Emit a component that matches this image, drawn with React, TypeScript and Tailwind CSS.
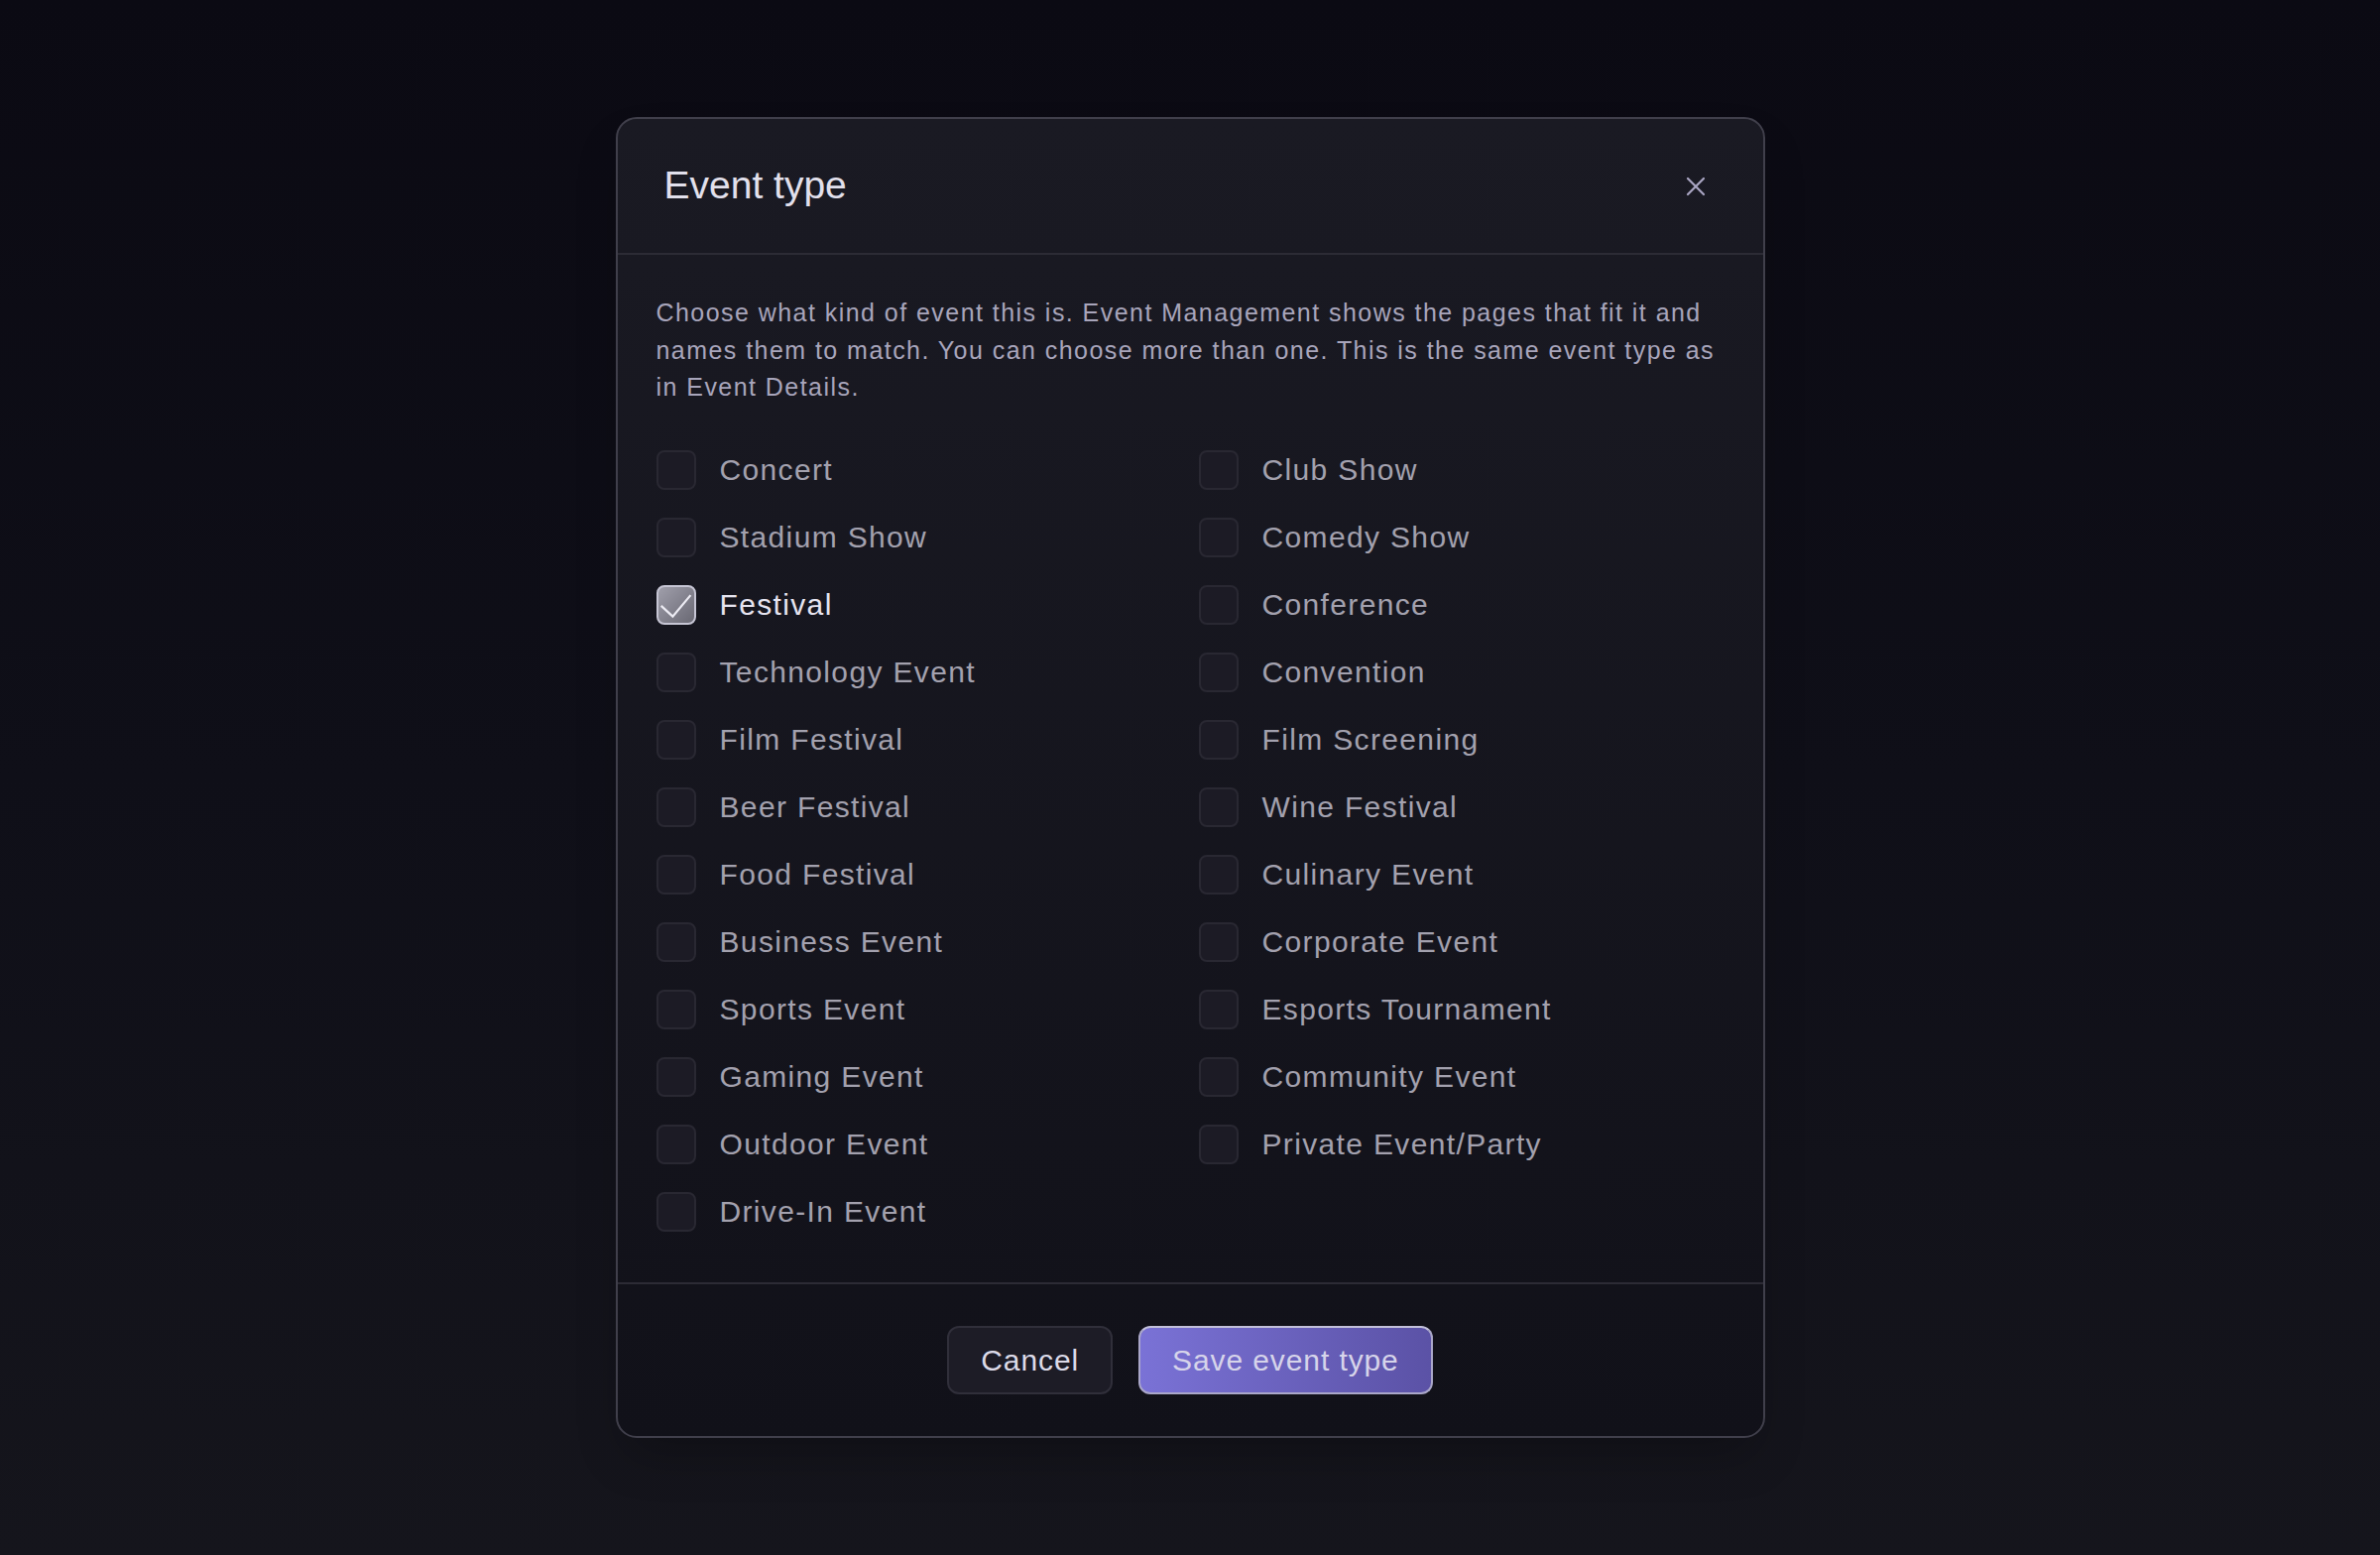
const left = [
  'Concert',
  'Stadium Show',
  'Festival',
  'Technology Event',
  'Film Festival',
  'Beer Festival',
  'Food Festival',
  'Business Event',
  'Sports Event',
  'Gaming Event',
  'Outdoor Event',
  'Drive-In Event',
];

const right = [
  'Club Show',
  'Comedy Show',
  'Conference',
  'Convention',
  'Film Screening',
  'Wine Festival',
  'Culinary Event',
  'Corporate Event',
  'Esports Tournament',
  'Community Event',
  'Private Event/Party',
];

const font = { fontFamily: '"Liberation Sans", Arial, sans-serif' };

function Option({ label, checked }: { label: string; checked: boolean }) {
  return (
    <label className="flex items-center gap-[24px] h-[40px] cursor-pointer">
      {checked ? (
        <span className="w-[40px] h-[40px] rounded-[8px] border-2 border-[#c6c5d4] bg-linear-to-br from-[#a09fab] to-[#6a6974] flex items-center justify-center overflow-hidden">
          <svg viewBox="0 0 40 40" className="w-[40px] h-[40px]">
            <polyline points="3,21 16,33 36,9" fill="none" stroke="#ecebf3" strokeWidth="2.5" />
          </svg>
        </span>
      ) : (
        <span className="w-[40px] h-[40px] rounded-[8px] border-2 border-[#292832] bg-[#1c1b25]" />
      )}
      <span className={`text-[30px] tracking-[0.045em] ${checked ? 'text-[#e6e4f0]' : 'text-[#a3a1ae]'}`}>{label}</span>
    </label>
  );
}

export default function App() {
  const selected = 'Festival';
  const rows: string[] = [];
  left.forEach((l, i) => {
    rows.push(l);
    if (right[i]) rows.push(right[i]);
  });

  return (
    <div style={font} className="min-h-screen w-full bg-linear-to-b from-[#0b0a13] via-[#0f0f18] to-[#15151c] flex justify-center pt-[118px]">
      <div className="w-[1159px] h-fit rounded-[21px] border-2 border-[#403f4b] bg-linear-to-b from-[#1a1a23] to-[#111119] shadow-2xl">
        <div className="h-[137px] flex items-center justify-between pl-[47px] pr-[58px] border-b-2 border-[#2c2b35]">
          <h1 className="text-[39px] text-[#e2e0ec] font-normal">Event type</h1>
          <button className="text-[#aaa6c3]">
            <svg viewBox="0 0 20 20" className="w-[20px] h-[20px]">
              <path d="M2 2 L18 18 M18 2 L2 18" stroke="currentColor" strokeWidth="2.2" strokeLinecap="round" />
            </svg>
          </button>
        </div>

        <div className="px-[39px] pt-[40px] pb-[51px]">
          <p className="text-[25px] leading-[37.5px] tracking-[0.058em] text-[#a8a5bb]">
            Choose what kind of event this is. Event Management shows the pages that fit it and names them to match. You can choose more than one. This is the same event type as in Event Details.
          </p>
          <div className="mt-[44px] grid grid-cols-2 gap-x-[17px] gap-y-[28px]">
            {rows.map((r) => (
              <Option key={r} label={r} checked={r === selected} />
            ))}
          </div>
        </div>

        <div className="border-t-2 border-[#2c2b35] py-[42px] flex justify-center gap-[26px]">
          <button className="h-[69px] px-[32px] rounded-[12px] border-2 border-[#302f3a] bg-[#1d1c26] text-[30px] tracking-[0.03em] text-[#dcdae8]">
            Cancel
          </button>
          <button className="h-[69px] px-[32px] rounded-[12px] border-2 border-[#aaa7c9] border-t-[#c2c0da] bg-linear-to-r from-[#7a72d6] to-[#5b52a6] text-[30px] tracking-[0.03em] text-[#d6d4ea]">
            Save event type
          </button>
        </div>
      </div>
    </div>
  );
}
